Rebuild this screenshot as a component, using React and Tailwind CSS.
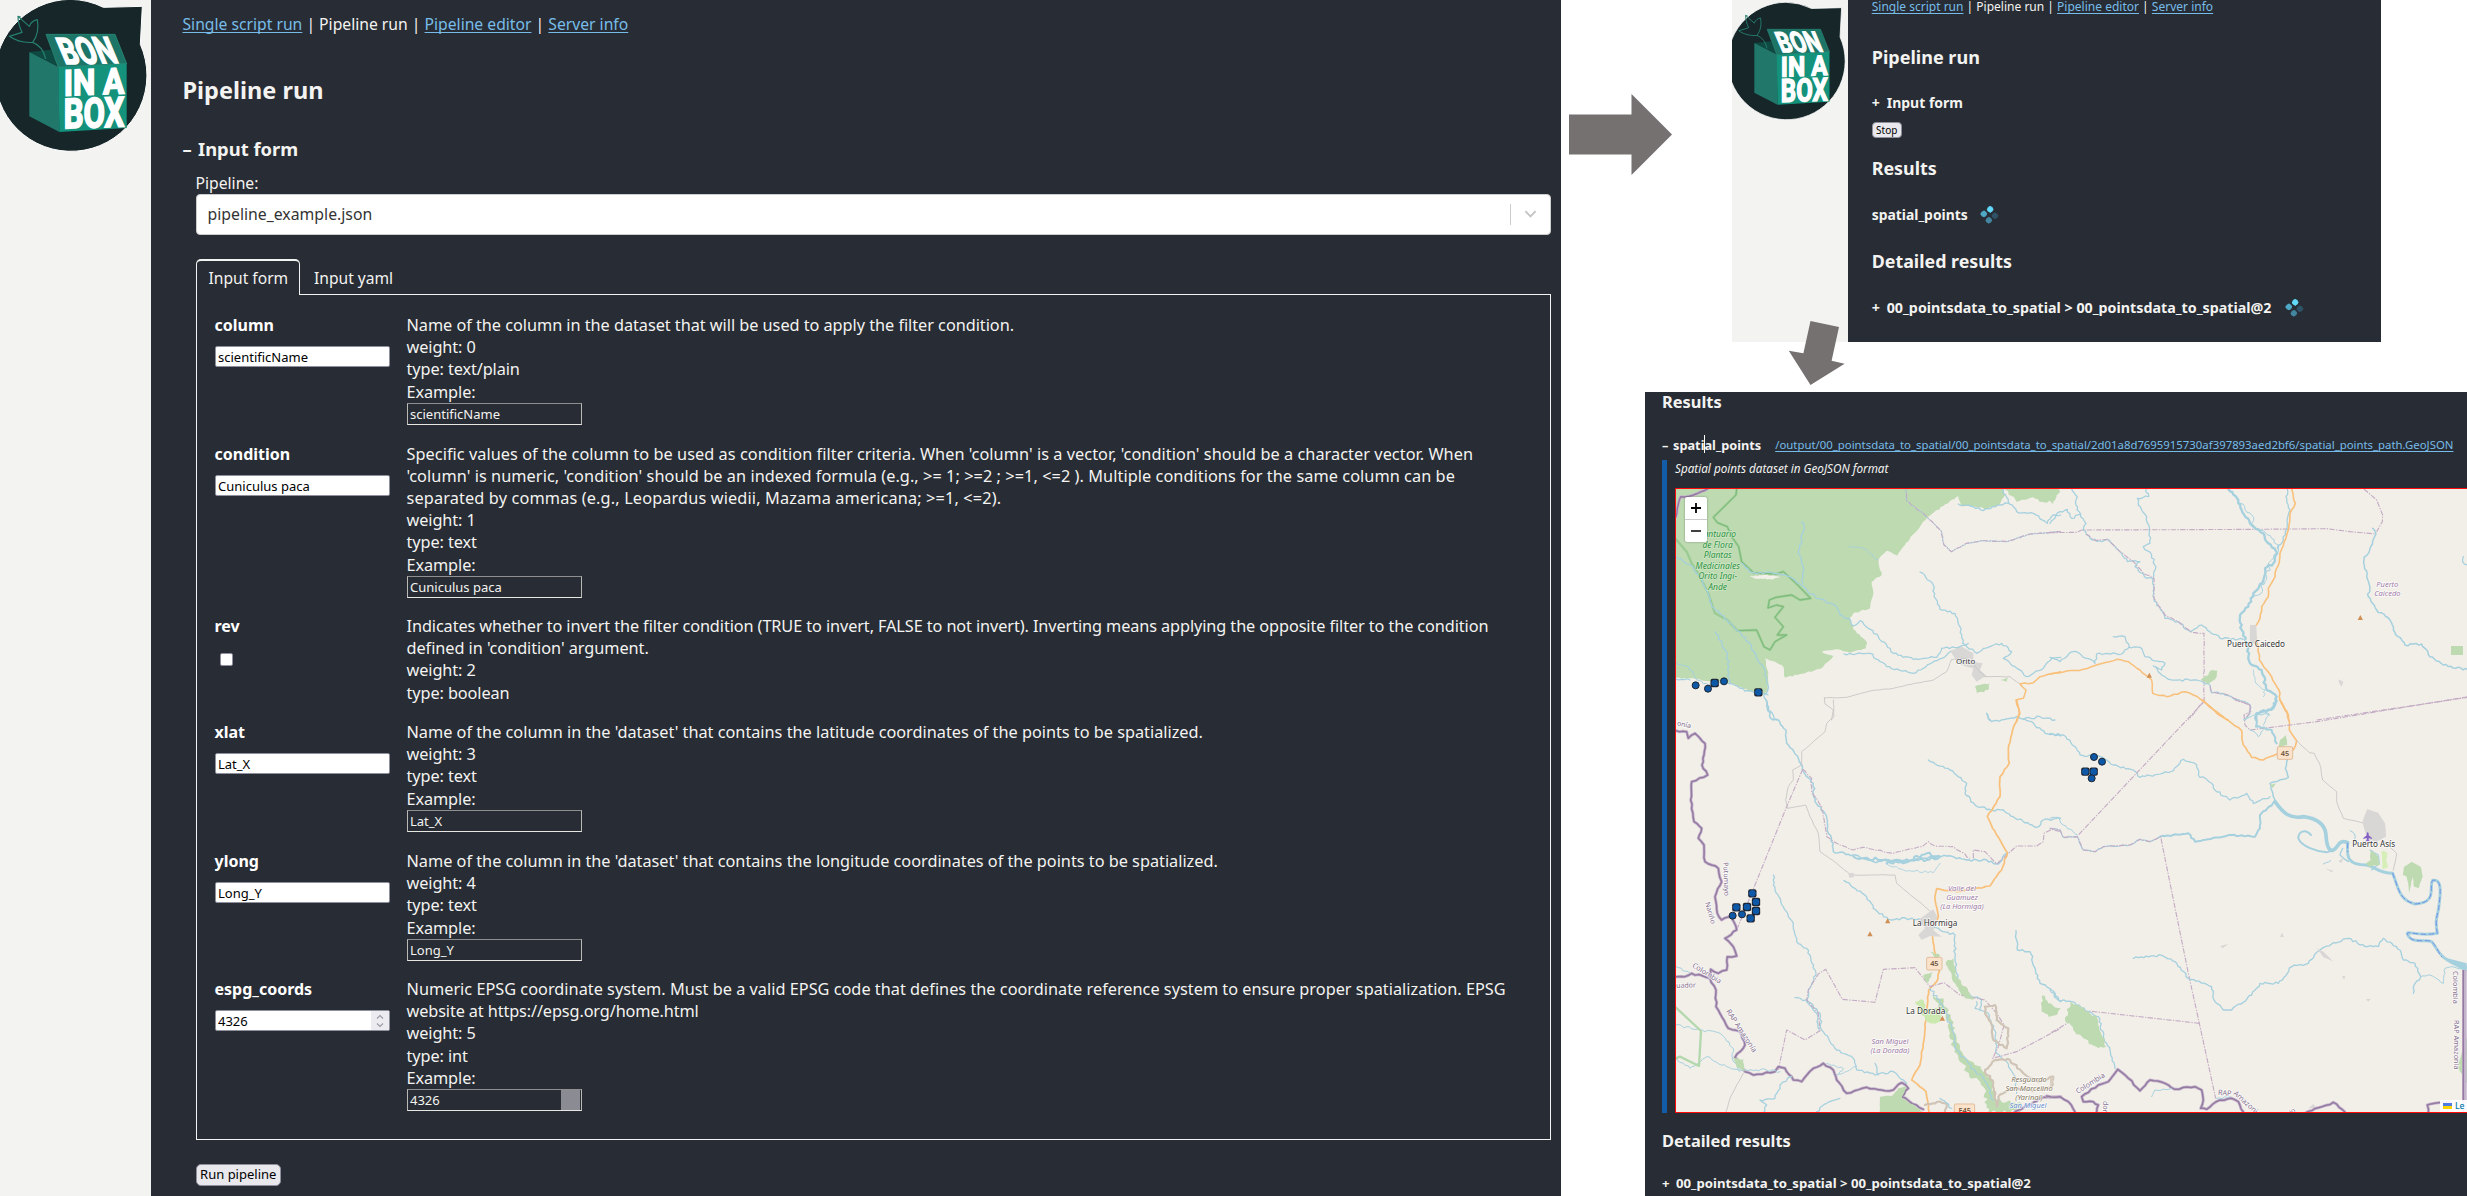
import React from "react";

const LINK = "text-[#77bce8] underline underline-offset-2 decoration-1 [text-decoration-skip-ink:none]";

/* ---------- helpers for the map drawing ---------- */

function parse(s) {
  return s.trim().split(/\s+/).map((p) => p.split(",").map(Number));
}

// Subdivides a polyline and offsets the new points so that rivers and coasts meander.
function meander(s, amp, step = 9, closed = false) {
  const pts = parse(s);
  if (closed) pts.push(pts[0]);
  let seed = Math.round(pts[0][0] * 13 + pts[0][1] * 7 + pts.length * 31) || 1;
  const rnd = () => {
    seed = (seed * 16807) % 2147483647;
    return seed / 2147483647 - 0.5;
  };
  rnd();
  const out = [pts[0]];
  for (let i = 1; i < pts.length; i++) {
    const [x0, y0] = pts[i - 1];
    const [x1, y1] = pts[i];
    const len = Math.hypot(x1 - x0, y1 - y0);
    const n = Math.max(1, Math.round(len / step));
    for (let k = 1; k <= n; k++) {
      const t = k / n;
      const o = k === n ? 0 : rnd() * 2 * amp;
      out.push([x0 + (x1 - x0) * t - ((y1 - y0) / len) * o, y0 + (y1 - y0) * t + ((x1 - x0) / len) * o]);
    }
  }
  return "M" + out.map(([x, y]) => x.toFixed(1) + " " + y.toFixed(1)).join("L") + (closed ? "Z" : "");
}

const line = { fill: "none", strokeLinejoin: "round", strokeLinecap: "round" };

const River = ({ d, w = 3.8, amp = 3.5, step = 8 }) => <path {...line} d={meander(d, amp, step)} stroke="#a5d0de" strokeWidth={w} />;
const Road = ({ d, w = 4.5 }) => <path {...line} d={meander(d, 2, 12)} stroke="#f8c07a" strokeWidth={w} />;
const Track = ({ d }) => <path {...line} d={meander(d, 1, 14)} stroke="#c6c4c4" strokeWidth="2.6" />;
const Wood = ({ d, amp = 5, fill = "#bddab1" }) => <path d={meander(d, amp, 8, true)} fill={fill} />;
const Urban = ({ d }) => <path d={meander(d, 1, 20, true)} fill="#d9d7d6" />;
const Limit = ({ d, amp = 0 }) => (
  <path {...line} strokeLinecap="butt" d={meander(d, amp, 10)} stroke="#c4acc4" strokeWidth="3.4" strokeDasharray="16 4 4 4" />
);
const Border = ({ d }) => (
  <>
    <path {...line} d={meander(d, 2.5, 12)} stroke="#c6b6cd" strokeWidth="9" />
    <path {...line} d={meander(d, 2.5, 12)} stroke="#957ba2" strokeWidth="4.5" />
  </>
);
const Peak = ({ x, y }) => <path d={`M${x} ${y - 8}l8 15h-16z`} fill="#d08f55" />;

const Label = ({ x, y, children, fill = "#333", size = 24.4, italic, rot, halo = "#ffffffcc", anchor = "middle" }) => (
  <text
    x={x}
    y={y}
    fill={fill}
    fontSize={size}
    fontStyle={italic ? "italic" : "normal"}
    textAnchor={anchor}
    stroke={halo}
    strokeWidth="4"
    paintOrder="stroke"
    transform={rot ? `rotate(${rot} ${x} ${y})` : undefined}
  >
    {children}
  </text>
);

const Shield = ({ x, y, children }) => (
  <g>
    <rect x={x - 23} y={y - 19} width="46" height="38" rx="4" fill="#fbe3cb" stroke="#dcb58f" strokeWidth="2.5" />
    <text x={x} y={y + 8} fontSize="22" fontWeight="600" fill="#6b5540" textAnchor="middle">
      {children}
    </text>
  </g>
);

const Marker = ({ x, y, square }) =>
  square ? (
    <g>
      <rect x={x - 12.5} y={y - 12.5} width="25" height="25" rx="6" fill="#1d2430" />
      <circle cx={x} cy={y} r="10" fill="#0e58a8" />
    </g>
  ) : (
    <circle cx={x} cy={y} r="10.5" fill="#0e58a8" stroke="#1d2430" strokeWidth="3" />
  );

const Q = ({ x, y, children }) => <g transform={`translate(${x} ${y}) scale(0.33333)`}>{children}</g>;

const NW = () => (
  <Q x={1640} y={380}>
    <Wood amp={2} d="100,320 1090,320 1095,345 1080,372 1040,388 1000,378 962,378 955,348 910,378 862,412 840,440 812,470 795,495 772,527 740,512 715,540 725,585 695,605 700,640 690,685 640,700 628,715 640,748 680,785 678,805 630,818 595,808 545,815 580,828 545,865 480,882 435,893 430,860 405,845 375,835 385,880 384,930 372,942 335,935 290,918 268,908 190,902 150,895 100,893" />
    <Wood amp={6} d="1085,320 1130,365 1180,352 1215,368 1245,362 1262,320" />
    <path d={meander("330,590 370,584 420,590 400,598 350,596", 2, 6, true)} fill="#f2efe9" />
    <path {...line} d="M290 327L288 345 220 412 232 428 262 440 275 470 296 500 305 545 340 578 408 582 430 575 470 612 512 655 480 660 455 645 408 652 388 660 384 684 410 675 430 680 405 712 430 740 412 765 440 765 405 785 390 810 372 800 350 750 292 752 262 720 225 700 205 640 180 590 155 550 140 515 108 478" stroke="#8fc68a" strokeWidth="7" opacity=".75" />
    <path {...line} d="M290 327L288 345 220 412 232 428 262 440 275 470 296 500 305 545 340 578 408 582 430 575 470 612 512 655 480 660 455 645 408 652 388 660 384 684 410 675 430 680 405 712 430 740 412 765 440 765 405 785 390 810 372 800 350 750 292 752" stroke="#74b774" strokeWidth="2.5" />
    <Border d="108,410 122,350 160,345 205,325" />
    <River d="108,530 150,555 180,590 205,640 215,680 262,720 292,752 330,790 350,835 375,870 384,930 372,945 385,990 410,1020" />
    <River d="485,425 492,445 475,520 490,560 488,610" />
    <River d="305,550 335,578 410,580 450,590 490,620 530,655 585,675 600,705 628,715 640,738 660,722 715,770 760,820 820,838 890,832 905,805 960,800 985,790" />
    <River d="225,755 262,820 268,910 300,925 345,940 384,945" />
    <River d="108,848 145,860 170,900 205,915 225,905 268,912" w={3} />
    <River d="108,898 150,900" />
    <River d="612,822 690,820 740,860 820,880 850,865 905,835 960,800" />
    <River d="840,576 880,615 882,650 900,688 945,700 960,740 968,790 1010,820 1030,805 1085,790 1115,815 1090,835 1125,860 1160,890 1210,865 1235,835 1262,832" />
    <River d="628,500 665,502 715,540" w={2.5} />
    <River d="1085,325 1105,365 1130,395 1180,400 1222,430 1240,405 1262,405" />
    <River d="955,372 1000,380 1030,392 1080,375 1105,370" />
    <River d="1262,455 1170,462 1100,485 1030,482 980,490 935,515 912,495 905,455 860,410 800,362 797,327" w={3} amp={1.5} />
    <Limit d="1262,455 1170,462 1100,485 1030,482 980,490 935,515 912,495 905,455 860,410 800,362 797,327" amp={1.5} />
    <Urban d="930,812 965,800 1000,820 1000,845 1028,850 1020,870 1040,888 1010,905 995,885 1000,865 965,855 945,835" />
    <Track d="553,954 620,952 690,933 760,925 800,915 880,900 920,875 935,838 985,835 1010,865 1035,890 1110,890 1140,912" />
    <Track d="553,954 555,972 580,990 575,1020" />
    <Wood d="1005,920 1050,910 1045,930 1010,940" amp={3} />
    <Wood d="1080,900 1105,892 1100,905" amp={2} />
    <Road d="1262,875 1200,890 1180,908 1140,912 1158,930 1150,955 1128,960 1140,1000 1130,1025" />
    <River d="1040,1000 1050,1022" />
    <River d="1150,1018 1200,1010 1245,1020" />
    <Label x={977} y={851} size={24}>Orito</Label>
    {["Santuario", "de Flora", "Plantas", "Medicinales", "Orito Ingi-", "Ande"].map((t, i) => (
      <Label key={t} x={233} y={472 + i * 31.5} size={25.5} italic fill="#2d9440" halo="#d9ecd2bb">
        {t}
      </Label>
    ))}
    <Marker x={167} y={916} />
    <Marker x={204} y={926} />
    <Marker x={224} y={909} square />
    <Marker x={252} y={904} />
    <Marker x={355} y={937} square />
  </Q>
);

const NE = () => (
  <Q x={2050} y={380}>
    <Wood d="-4,320 15,335 20,350 8,372 -4,360" amp={2} />
    <River d="0,430 30,395 52,388 65,415 92,402" />
    <River d="65,327 82,350 78,375 92,410 108,430 100,450" />
    <River d="288,327 296,350 262,355 265,375 290,410 298,450 300,490 280,500 305,525 318,560 310,595 312,655 345,715 385,725 420,755 455,735 510,775 580,778" />
    <River d="100,450 120,475 155,485 172,478 210,515 232,545 270,545 255,560 290,595 310,597" />
    <Limit d="0,458 80,457 95,450 400,449 620,448 830,446 900,455 978,462" />
    <Limit d="108,462 135,482 172,478 210,515 250,545 280,580 312,595 312,655 345,705 385,725 425,757 462,760 462,962 415,1020" amp={1} />
    <River d="535,327 565,360 575,390 600,430 640,460 655,490 682,520 670,550 645,565 640,600 610,640 595,680 570,705 575,750 590,790 600,850 635,870 650,930 680,950 670,985 620,1000 618,1020" w={7} />
    <River d="570,370 605,405 605,430 630,450 665,475 685,505 665,540 650,590 625,645 605,650" w={3} amp={7} />
    <River d="712,327 708,350 720,390 712,430 700,480 682,505" />
    <Road d="725,327 736,370 720,400 715,450 690,520 688,545 670,600 655,625 655,650 635,680 630,715 612,745 625,800 628,840 650,870 665,890 690,940 690,960 712,1000 716,1020" w={4.8} />
    <Limit d="942,327 980,360 998,405 997,425 980,455" />
    <River d="968,445 978,462 960,505 942,540 950,590 960,620 955,650 980,690 1020,720 1030,750 1065,795 1115,792 1140,830 1180,855 1255,870" w={4.5} />
    <River d="1240,530 1238,545 1252,555" />
    <River d="190,770 225,770 238,800 215,822 140,822 135,850 80,815 60,818 30,845 0,832" />
    <River d="238,802 275,805 285,830 345,850 335,870 310,858 330,880 365,900 440,900 480,915 485,938 520,940 600,975 600,1000 585,1020" />
    <Limit d="480,918 485,938 525,942 600,975 602,995 585,1015" amp={1} />
    <Road d="0,882 100,868 200,838 235,845 270,870 305,900 308,940 350,950 405,935 430,945 462,962 500,1000 535,1020" />
    <Limit d="800,1020 1255,952" />
    <Wood d="452,900 475,885 485,870 502,872 500,890 475,912" amp={3} />
    <Urban d="600,735 618,735 622,790 600,790" />
    <Urban d="865,898 880,905 875,920 868,910" />
    <rect x="1203" y="798" width="36" height="27" fill="#bddab1" />
    <River d="610,870 615,900 625,915 645,930 640,950" w={2.5} />
    <River d="580,1020 620,1000 660,1005" w={3} />
    <Peak x={931} y={713} />
    <Peak x={298} y={886} />
    <Label x={618} y={802}>Puerto Caicedo</Label>
    <Label x={1012} y={622} italic fill="#a07ba8" size={22.5}>Puerto</Label>
    <Label x={1012} y={648} italic fill="#a07ba8" size={22.5}>Caicedo</Label>
  </Q>
);

const SW = () => (
  <Q x={1640} y={700}>
    <River d="378,0 392,55 415,60 438,90 440,130 475,175 490,215 520,250 525,305 555,340 565,400 580,430 580,455 640,465 700,485 740,482 800,485 870,470 920,468 980,480 1040,480 1075,492 1100,460" w={4.5} />
    <River d="640,470 730,480 790,490 860,460 900,470 860,480 800,478 740,490" w={6} amp={6} />
    <River d="740,492 790,510 880,518 900,490" w={2.5} />
    <Limit d="488,208 515,235 515,275 545,320 560,410 600,435 640,450 670,442 760,460 845,440 865,425 885,438 940,440 990,475" amp={2} />
    <Limit d="1000,475 1000,450 1035,455 1070,492 1130,438 1190,438 1210,425 1212,400 1235,388 1262,395" />
    <Limit d="488,208 440,320 345,555 290,690" />
    <Track d="580,0 582,50 560,70 555,95 520,125 485,155 485,195 458,210 460,240 445,260 437,300 442,325 497,315 510,350 535,400 540,455 590,490 632,525 765,525 770,550 885,645" />
    <Urban d="625,520 640,518 642,532 628,533" />
    <River d="865,180 930,210 980,250 975,280 1005,315 1055,330 1090,330 1120,350 1190,382 1210,360 1262,355" w={4} />
    <River d="1040,40 1055,65 1130,50 1175,65 1215,100 1262,108" w={4} />
    <Road d="1130,0 1138,40 1118,90 1105,150 1108,190 1080,230 1080,290 1042,350 1070,405 1102,458 1085,510 1050,558 950,575 890,566 885,600 895,650 875,690 885,760 898,815 890,845 866,870 858,960 852,1020 840,1095 815,1140 858,1175 868,1240" w={5.2} />
    <River d="400,525 405,570 430,620 460,670 470,725 500,745 528,825 505,870 500,905" />
    <River d="465,893 505,905 540,940 545,990 590,1050 640,1075 650,1110 705,1125 760,1115 800,1150" />
    <River d="500,905 530,940 538,990" />
    <River d="612,542 680,590 700,625 745,658 820,655 860,665 900,690 945,705 945,770 955,850 990,885" w={4} />
    <River d="1010,905 1005,925 1045,940 1068,1000 1070,1060 1100,1085 1125,1130 1130,1180" w={3.6} />
    <River d="985,885 1025,900 1020,930" />
    <River d="1128,692 1132,750 1170,755 1200,850 1235,870 1262,905" w={4.2} />
    <Limit d="415,1110 440,990 495,1020 540,992 535,940 500,900 505,870 535,822 557,808 607,898 705,907 730,808 825,803 870,860 912,848 960,885 1035,900 1070,940 1092,975 1075,1040 1058,1075 1130,1055 1262,985" />
    <Urban d="835,660 880,628 892,650 880,690 905,710 870,708 845,720 835,705 855,685" />
    <Wood d="918,785 940,775 950,830 990,880 1000,900 975,895 940,845" amp={4} />
    <Wood d="870,755 900,765 890,780" amp={3} />
    <Wood d="850,825 880,815 860,850" amp={3} />
    <Wood d="825,905 850,900 855,925 905,925 900,965 870,970 845,945" amp={4} fill="#cbe8ae" />
    <Wood d="880,885 910,895 935,960 960,1040 985,1080 1050,1130 1070,1200 1100,1205 1145,1210 1140,1236 1045,1236 1030,1160 980,1115 940,1040 920,960" amp={7} />
    <River d="870,865 910,920 935,985 950,1050 985,1090 1040,1150 1060,1200" w={3.6} amp={5} />
    <Wood d="1208,885 1225,910 1262,925 1230,950 1205,935" amp={4} />
    <path {...line} d={meander("1035,920 1065,915 1070,960 1105,985 1100,1045 1060,1020 1055,975 1035,940", 3, 8, true)} stroke="#cfc4b6" strokeWidth="6.5" />
    <path {...line} d={meander("1065,1080 1110,1080 1150,1120 1200,1145 1240,1130 1235,1160 1200,1170 1110,1165 1075,1190 1070,1220 1060,1150 1035,1110", 4, 8, true)} stroke="#cfc4b6" strokeWidth="6.5" />
    <path {...line} d={meander("855,1215 900,1205 920,1212 915,1240", 2, 8)} stroke="#cfc4b6" strokeWidth="6.5" />
    <Border d="108,92 140,95 145,115 165,100 195,130 192,165 186,195 203,225 155,245 152,300 162,365 185,385 175,415 192,435 195,485 235,505 245,545 225,590 232,640 245,660 275,645 290,690 255,715 280,740 290,768 262,770 260,810 235,820 212,808 210,835 155,820 135,830 108,830" />
    <Border d="210,835 228,870 228,920 265,985 300,995 315,1035 285,1072 315,1115 340,1125 405,1115 415,1100 435,1105 460,1140 485,1145 520,1105 550,1090 580,1110 590,1140 620,1180 680,1162 735,1172 760,1170 785,1148 805,1165 785,1190 850,1228" />
    <Border d="1120,1240 1200,1195 1262,1190" />
    <Wood d="720,1190 755,1188 775,1165 800,1160 785,1192 850,1236 720,1240" amp={2} />
    <River d="108,975 180,990 240,1000 280,1045 278,1080 300,1110 380,1110 420,1115" w={3} />
    <River d="108,1075 150,1105 200,1070 260,1100 300,1115" w={3} />
    <Wood d="280,1075 310,1078 315,1115 290,1100" amp={2} />
    <River d="455,1130 425,1150 405,1195 360,1200 380,1215 368,1240" />
    <River d="560,1090 610,1105 590,1125 650,1100" w={2.6} />
    <River d="600,1195 560,1210 530,1235" />
    <River d="705,1090 715,1125" />
    <River d="108,800 150,820" w={3} />
    <River d="900,1195 935,1225" />
    <Track d="310,1120 272,1190 258,1236" />
    <path {...line} d="M108 923L183 993 177 1098 120 1070 108 1075" stroke="#b4d8ae" strokeWidth="7" />
    <Shield x={883} y={791}>45</Shield>
    <g>
      <rect x="943" y="1212" width="61" height="40" rx="4" fill="#fbe3cb" stroke="#dcb58f" strokeWidth="2.5" />
      <text x="974" y="1238" fontSize="22" fontWeight="600" fill="#6b5540" textAnchor="middle">E45</text>
    </g>
    <Peak x={743} y={663} />
    <Peak x={690} y={702} />
    <Peak x={907} y={955} />
    <Label x={885} y={678}>La Hormiga</Label>
    <Label x={857} y={943}>La Dorada</Label>
    {["Valle del", "Guamuez", "(La Hormiga)"].map((t, i) => (
      <Label key={t} x={966} y={573 + i * 26.5} italic fill="#a07ba8" size={22.5}>{t}</Label>
    ))}
    <Label x={750} y={1031} italic fill="#a07ba8" size={22.5}>San Miguel</Label>
    <Label x={750} y={1058} italic fill="#a07ba8" size={22.5}>(La Dorada)</Label>
    {["Resguardo", "San Marcelino", "(Yarinal)"].map((t, i) => (
      <Label key={t} x={1167} y={1147 + i * 26.5} italic fill="#86785e" size={22.5}>{t}</Label>
    ))}
    <Label x={1164} y={1225} italic fill="#6b8fce" size={22.5}>San Miguel</Label>
    <Label x={110} y={76} rot={12} fill="#85708f" size={21} anchor="start">onía</Label>
    <Label x={250} y={487} rot={88} fill="#85708f" size={21} anchor="start">Putumayo</Label>
    <Label x={195} y={608} rot={74} fill="#85708f" size={21} anchor="start">Nariño</Label>
    <Label x={155} y={800} rot={32} fill="#85708f" size={22} anchor="start">Colombia</Label>
    <Label x={109} y={864} rot={-2} fill="#85708f" size={21} anchor="start">uador</Label>
    <Label x={258} y={934} rot={57} fill="#85708f" size={22} anchor="start">RAP Amazonía</Label>
    <Marker x={337} y={580} square />
    <Marker x={348} y={606} square />
    <Marker x={289} y={622} square />
    <Marker x={321} y={621} square />
    <Marker x={348} y={633} square />
    <Marker x={306} y={643} />
    <Marker x={278} y={647} />
    <Marker x={332} y={655} square />
  </Q>
);

const SE = () => (
  <Q x={2050} y={700}>
    <River d="0,100 40,105 75,140 90,165 150,170 190,195 250,210 270,232 330,222 370,212 400,178 440,195 445,225 485,250 495,270 540,300 590,280 610,310 660,290" />
    <Limit d="462,5 85,405" />
    <Road d="455,0 500,35 575,92 580,135 605,172 640,180 680,162" w={5} />
    <Road d="690,0 715,45 718,90 740,122 730,150" w={5} />
    <Track d="740,122 778,158 793,160 812,200 818,240 860,275 860,305 880,355 945,370 1040,460 1030,510" />
    <Limit d="555,0 600,15 600,35 582,45 585,75 600,90 800,65 1255,-10" />
    <River d="680,0 665,30 620,40 618,80 665,90 680,130" w={6} />
    <River d="640,75 655,40 640,30" w={3} />
    <River d="600,90 625,110 640,90" w={3} />
    <River d="712,180 706,205 715,232 660,250 675,305" w={4.5} amp={1.5} />
    <River d="675,305 630,345 630,385 615,410 545,405 435,425 415,400 330,410" w={6} amp={2} />
    <path {...line} d="M675 305C700 340 720 358 760 350 C800 355 825 370 828 405 C830 440 838 455 850 450 C865 445 865 415 893 428" stroke="#a5d0de" strokeWidth="11" />
    <path {...line} d="M893 428C890 470 890 495 950 495 C975 500 985 520 1028 520" stroke="#a5d0de" strokeWidth="9" />
    <path {...line} d="M1028 520C1045 560 1045 600 1095 612 C1165 608 1135 560 1148 541 C1180 535 1170 590 1166 625 C1160 655 1155 660 1162 700 C1100 710 1070 690 1072 702 C1085 735 1130 715 1145 725 C1170 755 1165 780 1250 803" stroke="#a5d0de" strokeWidth="9" />
    <path {...line} d="M1028 520C1045 560 1045 600 1095 612 C1165 608 1135 560 1148 541 C1180 535 1170 590 1166 625 C1160 655 1155 660 1162 700 C1100 710 1070 690 1072 702 C1085 735 1130 715 1145 725 C1165 745 1165 760 1175 770M893 430V455" stroke="#6f93e8" strokeWidth="3" strokeDasharray="14 10" />
    <path {...line} d="M783 405C765 385 745 395 745 415 C755 440 800 455 830 457 L850 450" stroke="#a5d0de" strokeWidth="6" />
    <path d="M1175 770L1250 790V815L1200 790z" fill="#a5d0de" />
    <River d="820,492 842,482" w={3} amp={1} />
    <River d="895,485 870,465 878,445" w={4} amp={1} />
    <River d="900,392 915,405 910,430" w={3} />
    <River d="960,450 985,465 988,490 965,510" w={3.5} amp={1} />
    <River d="0,355 25,352 40,375 82,405" w={3} />
    <River d="0,385 30,390 40,412 82,410 100,450 135,455 160,440 240,435 270,418 300,425 332,410" w={3.6} amp={2} />
    <Limit d="0,385 30,390 40,412 82,410 100,450 135,455 160,440 240,435 270,418 300,425 332,410 350,500 415,820 448,970 497,1195" />
    <Limit d="448,970 115,933 0,1000" />
    <River d="250,775 335,766 375,785 415,835 485,860 495,905 520,930 545,930 605,885 630,850 685,850 725,800 775,790 810,750 850,728 895,715 945,740 985,740 1000,715 1050,750 1060,780 1095,790 1112,830 1095,850 1090,880" w={4} />
    <River d="1112,830 1140,825 1180,850 1185,805 1205,800 1250,812" w={3} amp={2} />
    <River d="0,870 25,900 65,905 115,935 145,950 160,1010 180,1050 195,1105" />
    <Wood d="60,905 85,915 115,935 142,955 155,1005 168,1040 145,1045 100,1015 70,990 45,960" amp={5} />
    <Wood d="-5,930 25,925 20,945 -5,950" amp={3} />
    <Wood d="708,105 712,135 685,142 690,120" amp={1} />
    <Wood d="1085,485 1112,500 1118,530 1105,565 1092,560 1088,530 1078,578 1070,530 1058,525 1062,500" amp={1} />
    <Wood d="960,450 985,470 990,495 960,500 948,490 962,480" amp={2} />
    <Wood d="995,452 1012,458 1008,480 1015,500 998,508" amp={1.5} fill="#d6efb9" />
    <Wood d="1251,1010 1235,1060 1222,1100 1251,1150" amp={1} />
    <Wood d="660,255 678,250 668,265" amp={1} />
    <Urban d="952,327 985,338 1005,370 1008,410 980,425 955,420 945,395 938,365" />
    <Urban d="510,738 535,732 518,745" />
    <Urban d="800,745 820,755 850,785 820,772" />
    <Urban d="690,710 697,698 702,712" />
    <Urban d="865,485 880,472 875,488" />
    <Urban d="825,505 850,512 845,517" />
    <Urban d="775,1225 790,1212 800,1225" />
    <Urban d="948,898 962,896 955,905" />
    <Urban d="876,828 886,828 882,840" />
    <Wood d="0,1130 12,1130 8,1155 0,1160" amp={1} fill="#d8cdbf" />
    <Border d="75,1236 55,1205 30,1190 -10,1188" />
    <Border d="140,1236 145,1215 130,1205 100,1205 95,1190 145,1155 175,1145 203,1108 235,1135 270,1172 300,1140 345,1150 375,1168 435,1160 455,1170 460,1200 452,1225 470,1228 510,1200 545,1195 565,1205 580,1236" />
    <River d="305,1190 315,1170 365,1165" w={3} />
    <River d="500,1195 540,1190" w={3} />
    <Border d="765,1240 850,1207 885,1236" />
    <Border d="1135,1240 1132,1215 1165,1208 1200,1205" />
    <path d="M1243 810V1240" stroke="#c6b6cd" strokeWidth="14" />
    <path d="M1240 810V1240" stroke="#957ba2" strokeWidth="4.5" />
    <Shield x={705} y={159}>45</Shield>
    <path d="M953 396l3 4v6l10 8v3l-10-3v6l4 4h-14l4-4v-6l-10 3v-3l10-8v-6z" fill="#8461c4" />
    <Label x={971} y={442} size={24.4}>Puerto Asís</Label>
    <Label x={1208} y={813} rot={90} fill="#85708f" size={22} anchor="start">Colombia</Label>
    <Label x={1211} y={960} rot={90} fill="#85708f" size={22} anchor="start">RAP Amazonía</Label>
    <Label x={83} y={1182} rot={-32} fill="#85708f" size={22} anchor="start">Colombia</Label>
    <Label x={160} y={1203} rot={92} fill="#85708f" size={21} anchor="start">dor</Label>
    <Label x={503} y={1184} rot={6} fill="#85708f" size={22} anchor="start">RAP</Label>
    <Label x={549} y={1182} rot={42} fill="#85708f" size={22} anchor="start">Amazoní</Label>
    <Label x={722} y={1244} rot={-28} fill="#85708f" size={21} anchor="start">io</Label>
    <Marker x={132} y={171} />
    <Marker x={156} y={185} />
    <Marker x={106} y={215} square />
    <Marker x={131} y={215} square />
    <Marker x={125} y={235} />
  </Q>
);

function Map() {
  return (
    <div className="relative h-[625px] overflow-hidden border border-r-0 border-[#ff0a0a] bg-[#f2efe9]">
      <svg className="block h-full w-full font-['Noto_Sans',sans-serif]" viewBox="1676 489 791 623" preserveAspectRatio="xMinYMin slice">
        <NW />
        <NE />
        <SW />
        <SE />
      </svg>
      <div className="absolute left-[9px] top-[8px] flex w-[22px] flex-col rounded-[2px] bg-white text-black shadow-[0_0_2px_rgba(0,0,0,0.4)]">
        <span className="flex h-[23px] items-center justify-center border-b border-[#ccc]">
          <svg width="10" height="10" viewBox="0 0 10 10"><path d="M0 5h10M5 0v10" stroke="#000" strokeWidth="1.8" /></svg>
        </span>
        <span className="flex h-[22px] items-center justify-center">
          <svg width="10" height="10" viewBox="0 0 10 10"><path d="M0 5h10" stroke="#000" strokeWidth="1.5" /></svg>
        </span>
      </div>
      <div className="absolute bottom-0 right-0 flex h-[12px] w-[27px] items-center gap-[3px] bg-white/90 pl-[3px] text-[8.600px] font-medium leading-[12px] text-[#0078a8]">
        <span className="flex h-[6px] w-[9px] shrink-0 flex-col">
          <i className="h-[3px] bg-[#4c7be1]" />
          <i className="h-[3px] bg-[#ffd500]" />
        </span>
        <span>Le</span>
      </div>
    </div>
  );
}

/* ---------- shared pieces ---------- */

function Logo({ className }) {
  return (
    <svg className={`overflow-visible ${className}`} viewBox="-18 -4 462 462" fontFamily="Roboto, sans-serif" fontWeight="700" fill="#fff">
      <path d="M211 -3A228 228 0 1 0 421 132L427 18 310 21A228 228 0 0 0 211 -3Z" fill="#162629" stroke="#fff" strokeWidth="3" />
      <path d="M88 155L152 148 178 200z" fill="#0f4a42" />
      <path d="M138 102H345L380 190 175 200z" fill="#1c7566" />
      <path d="M88 155L176 200 178 395 88 348z" fill="#20776a" />
      <path d="M175 200L380 189V383L178 395z" fill="#14927b" />
      <path d="M138 102H345L380 190 175 200z" fill="none" stroke="#2a8a78" strokeWidth="2.5" />
      <path d="M137 176C132 152 120 134 98 126C72 128 45 120 28 108L66 96C58 80 54 62 54 48L88 78C92 66 102 60 112 58C116 82 114 106 98 126M54 48L62 50" fill="none" stroke="#27806f" strokeWidth="3.5" strokeLinejoin="round" />
      <g stroke="#fff" strokeWidth="4.5">
        <text transform="matrix(1.66 -0.03 0.46 1.09 194 191)" fontSize="100" textLength="100" lengthAdjust="spacingAndGlyphs">BON</text>
        <text transform="matrix(1.82 -0.07 0 1.07 191 286)" fontSize="100" textLength="100" lengthAdjust="spacingAndGlyphs">IN A</text>
        <text transform="matrix(1.82 -0.06 0 1.24 191 384)" fontSize="100" textLength="100" lengthAdjust="spacingAndGlyphs">BOX</text>
      </g>
    </svg>
  );
}

function Nav({ className }) {
  return (
    <nav className={`whitespace-nowrap ${className}`}>
      <a className={LINK}>Single script run</a> | Pipeline run | <a className={LINK}>Pipeline editor</a> | <a className={LINK}>Server info</a>
    </nav>
  );
}

function Spinner() {
  return (
    <svg className="h-[19px] w-[19px] shrink-0" viewBox="60 41 57 57">
      <path d="M90 43l11 11-10 11-11-10z" fill="#61dafb" />
      <path d="M72 57l10 10-10 11-12-10z" fill="#4fa9c6" />
      <path d="M87 76l10 11-11 10-10-9z" fill="#43869f" />
      <path d="M104 63l12 10-11 11-11-10z" fill="#305266" />
      <g opacity=".8">
        <circle cx="90.500" cy="54" r="9" fill="#61dafb" />
        <circle cx="71.500" cy="68" r="9" fill="#4fa9c6" />
        <circle cx="86.500" cy="87" r="9" fill="#43869f" />
        <circle cx="105" cy="73.500" r="9" fill="#305266" />
      </g>
    </svg>
  );
}

/* ---------- input form ---------- */

const ROWS = [
  {
    id: "column",
    value: "scientificName",
    h: "h-[128.700px]",
    text: [["Name of the column in the dataset that will be used to apply the filter condition.", "tracking-[-0.04px]"]],
    weight: 0,
    type: "text/plain",
  },
  {
    id: "condition",
    value: "Cuniculus paca",
    h: "h-[172.300px]",
    text: [
      ["Specific values of the column to be used as condition filter criteria. When 'column' is a vector, 'condition' should be a character vector. When", "tracking-[0.05px]"],
      ["'column' is numeric, 'condition' should be an indexed formula (e.g., >= 1; >=2 ; >=1, <=2 ). Multiple conditions for the same column can be", "tracking-[0.06px]"],
      ["separated by commas (e.g., Leopardus wiedii, Mazama americana; >=1, <=2).", "tracking-[0.14px]"],
    ],
    weight: 1,
    type: "text",
  },
  {
    id: "rev",
    h: "h-[106px]",
    text: [
      ["Indicates whether to invert the filter condition (TRUE to invert, FALSE to not invert). Inverting means applying the opposite filter to the condition", "tracking-[-0.1px]"],
      ["defined in 'condition' argument.", "tracking-[-0.05px]"],
    ],
    weight: 2,
    type: "boolean",
  },
  {
    id: "xlat",
    value: "Lat_X",
    h: "h-[129px]",
    text: [["Name of the column in the 'dataset' that contains the latitude coordinates of the points to be spatialized.", "tracking-[-0.01px]"]],
    weight: 3,
    type: "text",
  },
  {
    id: "ylong",
    value: "Long_Y",
    h: "h-[128px]",
    text: [["Name of the column in the 'dataset' that contains the longitude coordinates of the points to be spatialized.", "tracking-[-0.01px]"]],
    weight: 4,
    type: "text",
  },
  {
    id: "espg_coords",
    value: "4326",
    h: "h-[161px]",
    number: true,
    text: [
      ["Numeric EPSG coordinate system. Must be a valid EPSG code that defines the coordinate reference system to ensure proper spatialization. EPSG", "tracking-[0.01px]"],
      ["website at https://epsg.org/home.html", "tracking-[-0.12px]"],
    ],
    weight: 5,
    type: "int",
  },
];

function Field({ row }) {
  return (
    <div className={`grid grid-cols-[192px_1fr] ${row.h}`}>
      <div>
        <div className="text-[16px] font-bold leading-[22.100px] text-white">{row.id}</div>
        {row.value ? (
          <div className="mt-[9.900px] flex h-[21px] w-[175px] justify-between rounded-[2px] border border-[#8f8f9d] bg-white pl-[2.500px] text-[13px] leading-[20px] text-black">
            <span>{row.value}</span>
            {row.number && (
              <span className="flex w-[18px] items-center justify-center bg-[#ececf0]">
                <svg width="8" height="14" viewBox="0 0 8 14"><path d="M1 4.500L4 1.500L7 4.500M1 9.500L4 12.500L7 9.500" fill="none" stroke="#9a9aa6" strokeWidth="1.200" /></svg>
              </span>
            )}
          </div>
        ) : (
          <div className="ml-[5px] mt-[15.500px] h-[13px] w-[13px] rounded-[2px] border border-[#8f8f9d] bg-white" />
        )}
      </div>
      <div className="whitespace-nowrap text-[16.300px] leading-[22.150px]">
        {row.text.map(([t, tracking]) => (
          <div key={t} className={tracking}>{t}</div>
        ))}
        <div className="tracking-[-0.1px]">weight: {row.weight}</div>
        <div className="tracking-[-0.1px]">type: {row.type}</div>
        {row.value && (
          <>
            <div className="tracking-[-0.1px]">Example:</div>
            <div className="flex h-[22px] w-[175px] justify-between border border-[#b9b9b5] border-t-[#8f8f8f] border-b-[#e6e6e2] pl-[2.500px] text-[13px] leading-[20px]">
              <span>{row.value}</span>
              {row.number && <span className="mr-px w-[19px] bg-[#8a8b93]" />}
            </div>
          </>
        )}
      </div>
    </div>
  );
}

function RunPanel() {
  return (
    <section className="flex h-full w-[1561px] shrink-0 bg-[#282c34] text-[#f3f3f1]">
      <aside className="h-full w-[151px] shrink-0 bg-[#f3f3f1]">
        <Logo className="-ml-[6px] -mt-[1.500px] h-[154px] w-[154px]" />
      </aside>
      <div className="flex-1 pl-[31.500px] pr-[10.500px] pt-[11.500px]">
        <Nav className="text-[15.700px] leading-6" />
        <h2 className="mt-[38px] text-[23.500px] font-bold leading-8">Pipeline run</h2>
        <h3 className="mt-[31px] flex text-[18.400px] font-bold leading-6">
          <span className="w-[15.500px]">–</span>Input form
        </h3>
        <div className="pl-[13px]">
          <div className="mt-[12px] text-[15.700px] leading-[21px]">Pipeline:</div>
          <div className="flex h-[41px] items-center rounded-[4px] border border-[#cccccc] bg-white pl-[11px] text-[15.800px] text-[#333]">
            <span className="flex-1 pt-[2px]">pipeline_example.json</span>
            <span className="h-[21px] w-px bg-[#ccc]" />
            <svg className="mx-[13px]" width="13" height="8" viewBox="0 0 14 8"><path d="M1.500 1L7 6.500L12.500 1" fill="none" stroke="#c4c4c4" strokeWidth="2" /></svg>
          </div>
          <div className="mt-[24px] flex h-[36px] text-[15.600px] leading-[34px]">
            <div className="w-[104px] rounded-t-[5px] border border-b-0 border-t-2 border-[#f3f3f1] pl-[12px]">Input form</div>
            <div className="flex-1 border-b border-[#f3f3f1] pl-[14.500px] pt-[2px]">Input yaml</div>
          </div>
          <div className="h-[845px] border border-t-0 border-[#f3f3f1] pl-[18px] pt-[19.600px]">
            {ROWS.map((row) => (
              <Field key={row.id} row={row} />
            ))}
          </div>
          <button className="mt-[24px] flex h-[22.500px] w-[85.500px] items-center justify-center rounded-[5px] border border-[#8f8f9d] bg-[#e9e9ed] text-[13px] leading-none text-black">
            Run pipeline
          </button>
        </div>
      </div>
    </section>
  );
}

function ProgressPanel() {
  return (
    <section className="ml-[60px] flex h-[342px] w-[649px] overflow-hidden bg-[#282c34] text-[#f3f3f1]">
      <aside className="h-full w-[116px] shrink-0 bg-[#f3f3f1]">
        <Logo className="-ml-[5px] mt-[2px] h-[119px] w-[119px]" />
      </aside>
      <div className="whitespace-nowrap pl-[23.700px] font-bold">
        <Nav className="-mt-[1.200px] text-[12.020px] font-normal leading-4" />
        <h2 className="mt-[30.200px] text-[18.050px] leading-6">Pipeline run</h2>
        <h3 className="mt-[23.600px] flex text-[14px] leading-5">
          <span className="w-[15px]">+</span>Input form
        </h3>
        <button className="mt-[9.400px] flex h-[16px] w-[30px] items-center justify-center rounded-[4px] border border-[#8f8f9d] bg-[#e9e9ed] text-[10px] font-normal leading-none text-black">
          Stop
        </button>
        <h2 className="mt-[17.700px] text-[17.900px] leading-6">Results</h2>
        <h3 className="mt-[24.900px] flex h-5 text-[13.900px] leading-5">
          <span className="w-[108px]">spatial_points</span>
          <Spinner />
        </h3>
        <h2 className="mt-[24.100px] text-[17.850px] leading-6">Detailed results</h2>
        <h3 className="mt-[24.900px] flex h-5 text-[14.270px] leading-5">
          <span className="w-[15px]">+</span>
          <span className="w-[398px]">00_pointsdata_to_spatial &gt; 00_pointsdata_to_spatial@2</span>
          <Spinner />
        </h3>
      </div>
    </section>
  );
}

function ResultPanel() {
  return (
    <section className="ml-[84px] mt-[50px] h-[804px] overflow-hidden whitespace-nowrap bg-[#282c34] pl-[17px] font-bold text-[#f3f3f1]">
      <h2 className="-mt-[1.200px] text-[16.400px] leading-[22px]">Results</h2>
      <h3 className="mt-[21.700px] flex text-[12.750px] leading-5">
        <span className="w-[11px]">–</span>
        <span>spati</span>
        <span className="-mx-[0.500px] h-[18px] w-px bg-white" />
        <span>al_points</span>
        <a className={`ml-[14px] text-[11.360px] font-normal ${LINK}`}>
          /output/00_pointsdata_to_spatial/00_pointsdata_to_spatial/2d01a8d7695915730af397893aed2bf6/spatial_points_path.GeoJSON
        </a>
      </h3>
      <div className="mt-[5.500px] h-[653px] border-l-[5px] border-[#125ca8] pl-[8px] font-normal">
        <p className="mb-[12px] text-[11.700px] italic leading-4">Spatial points dataset in GeoJSON format</p>
        <Map />
      </div>
      <h2 className="mt-[16.800px] text-[16.400px] leading-[22px]">Detailed results</h2>
      <h3 className="mt-[21.600px] flex text-[13.160px] leading-5">
        <span className="w-[14px]">+</span>00_pointsdata_to_spatial &gt; 00_pointsdata_to_spatial@2
      </h3>
    </section>
  );
}

export default function App() {
  return (
    <main className="relative flex h-[1196px] w-[2467px] overflow-hidden bg-white font-['Noto_Sans','Open_Sans',sans-serif]">
      <RunPanel />
      <div className="min-w-0 flex-1">
        <div className="flex">
          <svg className="ml-[8px] mt-[94px] h-[81px] w-[103px] shrink-0" viewBox="0 0 103 81">
            <path d="M0 20.500H62.500V0L103 40.500L62.500 81V60.500H0z" fill="#767171" />
          </svg>
          <ProgressPanel />
        </div>
        <ResultPanel />
      </div>
      <svg className="absolute left-[1788px] top-[320px] h-[66px] w-[58px]" viewBox="1788 320 58 66">
        <path d="M1810.500 321L1839 327L1831.600 360.700L1844.600 363.700L1810.500 385L1788.800 350.700L1803.400 353.300z" fill="#767171" />
      </svg>
    </main>
  );
}
